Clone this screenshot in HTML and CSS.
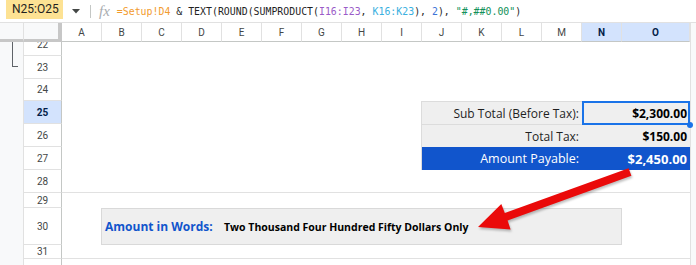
FILE: index.html
```html
<!DOCTYPE html>
<html>

<head>
    <title>Invoice - Amount in Words</title>
    <link rel="stylesheet" href="styles.css">
</head>

<body>
    <!-- formula bar -->
    <div class="topbar">
        <div class="namebox">N25:O25</div>
        <svg class="caret" width="8" height="5" viewBox="0 0 8 5"><path d="M0 0h8L4 4.5z" fill="#444746"/></svg>
        <span class="sep"></span>
        <span class="fx">fx</span>
        <div class="formula"><span class="f-a">=Setup!D4</span> &amp; TEXT(ROUND(SUMPRODUCT(<span class="f-b">I16:I23</span>, <span class="f-c">K16:K23</span>), <span class="f-n">2</span>), <span class="f-s">"#,##0.00"</span>)</div>
    </div>

    <div class="sheet">
        <!-- header row -->
        <div class="corner-gutter"></div>
        <div class="corner"></div>
        <div class="ch">A</div>
        <div class="ch">B</div>
        <div class="ch">C</div>
        <div class="ch">D</div>
        <div class="ch">E</div>
        <div class="ch">F</div>
        <div class="ch">G</div>
        <div class="ch">H</div>
        <div class="ch">I</div>
        <div class="ch">J</div>
        <div class="ch">K</div>
        <div class="ch">L</div>
        <div class="ch">M</div>
        <div class="ch ch-sel">N</div>
        <div class="ch ch-sel">O</div>
        <div class="scroll"></div>

        <!-- left gutter with row group bracket -->
        <div class="gutter">
            <span class="bracket"></span>
        </div>

        <!-- row headers -->
        <div class="rh rh-cut"><span>22</span></div>
        <div class="rh">23</div>
        <div class="rh">24</div>
        <div class="rh rh-sel">25</div>
        <div class="rh">26</div>
        <div class="rh">27</div>
        <div class="rh">28</div>
        <div class="rh">29</div>
        <div class="rh">30</div>
        <div class="rh">31</div>
        <div class="rh rh-last"></div>

        <!-- visible borders in the cell area -->
        <div class="hline hline-28"></div>
        <div class="hline hline-31"></div>

        <!-- totals -->
        <div class="totals">
            <div class="t-label">Sub Total (Before Tax):</div>
            <div class="t-value t-active">$2,300.00</div>
            <div class="t-label">Total Tax:</div>
            <div class="t-value">$150.00</div>
            <div class="t-label t-pay">Amount Payable:</div>
            <div class="t-value t-pay t-pay-value">$2,450.00</div>
        </div>

        <!-- amount in words -->
        <div class="words">
            <div class="words-label">Amount in Words:</div>
            <div class="words-text">Two Thousand Four Hundred Fifty Dollars Only</div>
        </div>
    </div>

    <!-- callout arrow -->
    <svg class="arrow" width="696" height="265" viewBox="0 0 696 265">
        <polygon points="478,227 510.6,229.5 507.6,220.6 631.4,175.8 628.6,168.2 504.8,213 501.3,204" fill="#ea0a0a"/>
    </svg>
</body>

</html>
```

FILE: styles.css
```css
body {
    margin: 0;
    width: 696px;
    height: 265px;
    overflow: hidden;
    position: relative;
    background: #fff;
    font-family: Roboto, Arial, sans-serif;
    color: #1f1f1f;
}

/* formula bar */
.topbar {
    height: 22px;
    display: flex;
    align-items: center;
    border-bottom: 1px solid #e1e1e1;
}

.namebox {
    align-self: flex-start;
    margin-left: 6px;
    width: 57px;
    height: 19px;
    box-sizing: border-box;
    padding-left: 6px;
    background: #fde293;
    font-size: 12px;
    line-height: 19px;
    color: #1f1f1f;
}

.caret {
    margin-left: 9px;
}

.sep {
    width: 1px;
    height: 13px;
    margin-left: 10px;
    background: #c4c7c5;
}

.fx {
    margin-left: 8px;
    font-family: "Liberation Serif", serif;
    font-style: italic;
    font-size: 15px;
    color: #a8acb0;
}

.formula {
    margin-left: 7px;
    font-family: "DejaVu Sans Mono", monospace;
    font-size: 9.9px;
    white-space: nowrap;
    color: #1f1f1f;
}

.f-a { color: #f29b2e; }
.f-b { color: #9a5bc8; }
.f-c { color: #3ab0e0; }
.f-n { color: #3b73d6; }
.f-s { color: #12915a; }

/* sheet grid */
.sheet {
    display: grid;
    grid-template-columns: 23px 39px repeat(14, 40px) 68px 6px;
    grid-template-rows: 19px 14px 23px 22px 23px 23px 23px 23px 15px 37px 14px 6px;
    overflow: hidden;
}

.corner-gutter {
    grid-row: 1;
    grid-column: 1;
    background: #f8f9fa;
    border-bottom: 3px solid #c7c7c7;
}

.corner {
    grid-row: 1;
    grid-column: 2;
    background: #f8f9fa;
    border-left: 1px solid #e1e1e1;
    border-right: 4px solid #c7c7c7;
    border-bottom: 3px solid #c7c7c7;
}

.ch {
    grid-row: 1;
    display: flex;
    align-items: center;
    justify-content: center;
    border-right: 1px solid #e1e1e1;
    border-bottom: 1px solid #c4c7c5;
    font-size: 10px;
    color: #444746;
}

.ch-sel {
    background: #d3e3fd;
    color: #041e49;
    font-weight: bold;
}

.scroll {
    grid-row: 1 / -1;
    grid-column: 18;
    background: #f8f9fa;
    border-left: 1px solid #e1e1e1;
}

.gutter {
    grid-row: 2 / -1;
    grid-column: 1;
    position: relative;
    background: #f8f9fa;
}

.bracket {
    position: absolute;
    left: 12px;
    top: 0;
    width: 5px;
    height: 24px;
    border-left: 1px solid #5f6368;
    border-bottom: 1px solid #5f6368;
}

.rh {
    grid-column: 2;
    display: flex;
    align-items: center;
    justify-content: center;
    border-left: 1px solid #e1e1e1;
    border-right: 1px solid #c4c7c5;
    border-bottom: 1px solid #e1e1e1;
    font-size: 10px;
    color: #444746;
    overflow: hidden;
}

.rh-cut {
    align-items: flex-start;
}

.rh-cut span {
    line-height: 23px;
    margin-top: -9px;
}

.rh-sel {
    background: #d3e3fd;
    color: #041e49;
    font-weight: bold;
}

.rh-last {
    border-bottom: none;
}

.hline {
    grid-column: 3 / 18;
    border-bottom: 1px solid #e1e1e1;
}

.hline-28 { grid-row: 8; }
.hline-31 { grid-row: 11; }

/* totals block */
.totals {
    grid-row: 5 / 8;
    grid-column: 12 / 18;
    margin-left: -1px;
    display: grid;
    grid-template-columns: 161px 108px;
    grid-template-rows: 23px 23px 23px;
    background: #efefef;
    font-family: "Open Sans", sans-serif;
    font-size: 12px;
}

.t-label,
.t-value {
    display: flex;
    align-items: center;
    justify-content: flex-end;
    padding-right: 3px;
    border-top: 1px solid #dcdcdc;
    color: #1f1f1f;
}

.t-label {
    border-left: 1px solid #dcdcdc;
}

.t-value {
    font-weight: bold;
    color: #000;
}

.t-active {
    position: relative;
}

.t-active::after {
    content: "";
    position: absolute;
    left: 0;
    top: -1px;
    right: 0;
    bottom: -1px;
    border: 2px solid #1a73e8;
    box-sizing: border-box;
}

.t-active::before {
    content: "";
    position: absolute;
    right: -3px;
    bottom: -4px;
    width: 6px;
    height: 6px;
    border-radius: 50%;
    background: #1a73e8;
    z-index: 1;
}

.t-pay {
    background: #1155cc;
    color: #fff;
    font-size: 12.5px;
    border-top: none;
}

.t-pay-value {
    font-size: 13px;
}

/* amount in words */
.words {
    grid-row: 10;
    grid-column: 4 / 17;
    margin-left: -1px;
    display: flex;
    align-items: center;
    background: #efefef;
    border: 1px solid #d9d9d9;
    font-family: "Open Sans", sans-serif;
    font-weight: bold;
}

.words-label {
    width: 120px;
    padding-left: 3px;
    box-sizing: border-box;
    font-size: 12px;
    color: #1155cc;
}

.words-text {
    padding-left: 2px;
    font-size: 10.5px;
    color: #000;
}

/* callout arrow over the sheet */
.arrow {
    position: absolute;
    left: 0;
    top: 0;
    pointer-events: none;
    filter: drop-shadow(1px 2px 1px rgba(0, 0, 0, 0.25));
}
```
